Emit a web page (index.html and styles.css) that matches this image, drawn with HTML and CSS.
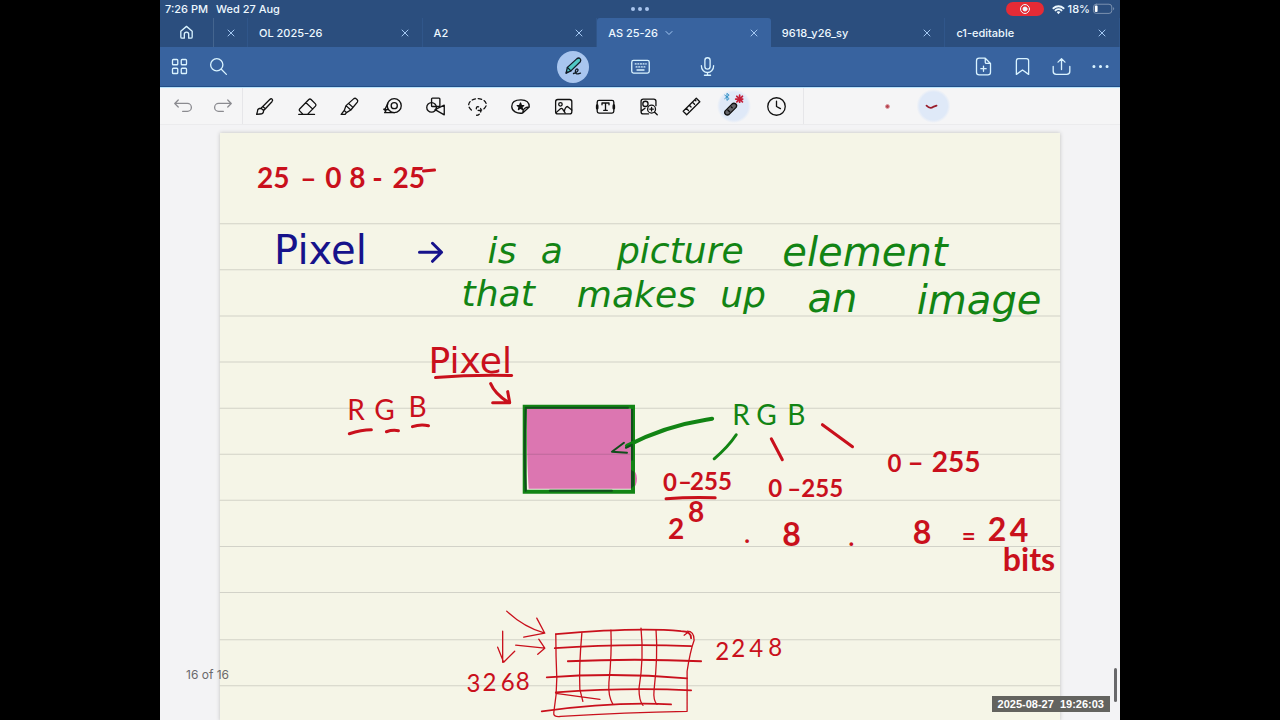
FILE: index.html
```html
<!DOCTYPE html>
<html lang="en">
<head>
<meta charset="utf-8">
<meta name="viewport" content="width=device-width, initial-scale=1">
<title>AS 25-26</title>
<link rel="stylesheet" href="styles.css">
</head>
<body>
<main class="device">
  <header class="status">
    <div class="status-left"><span>7:26 PM</span><span>Wed 27 Aug</span></div>
    <svg class="dots" viewBox="0 0 20 6"><circle cx="3" cy="3" r="2"/><circle cx="10" cy="3" r="2"/><circle cx="17" cy="3" r="2"/></svg>
    <div class="status-right">
      <span class="rec"><svg viewBox="0 0 12 12"><circle cx="6" cy="6" r="4.5"/><circle class="solid" cx="6" cy="6" r="2"/></svg></span>
      <svg class="wifi" viewBox="0 0 14 11"><path d="M1.5 4.2a8 8 0 0 1 11 0M3.7 6.5a4.8 4.8 0 0 1 6.6 0"/><path class="solid" d="M7 10.5 4.9 8.3a3.2 3.2 0 0 1 4.2 0z"/></svg>
      <span>18%</span>
      <svg class="battery" viewBox="0 0 24 12"><rect class="shell" x=".5" y=".8" width="20" height="10" rx="3"/><rect class="charge" x="2" y="2.3" width="3" height="7" rx="1"/><path class="cap" d="M22 4.2c1.5.4 1.5 2.8 0 3.2z"/></svg>
    </div>
  </header>

  <nav class="tabs" aria-label="Open documents">
    <button class="home" aria-label="Home"><svg class="icon" viewBox="0 0 24 24"><path d="M5.500 10.500 12 5l6.500 5.500v6.500q0 1.500-1.500 1.500h-2.500v-4.500a2.500 2.500 0 0 0-5 0v4.500H7Q5.500 18.500 5.500 17z"/></svg></button>
    <div class="tab stub"><button class="close" aria-label="Close tab"><svg viewBox="0 0 8 8"><path d="m1 1 6 6M7 1 1 7"/></svg></button></div>
    <div class="tab"><button class="name">OL 2025-26</button><button class="close" aria-label="Close OL 2025-26"><svg viewBox="0 0 8 8"><path d="m1 1 6 6M7 1 1 7"/></svg></button></div>
    <div class="tab"><button class="name">A2</button><button class="close" aria-label="Close A2"><svg viewBox="0 0 8 8"><path d="m1 1 6 6M7 1 1 7"/></svg></button></div>
    <div class="tab active"><button class="name">AS 25-26 <svg class="chevron" viewBox="0 0 8 8"><path d="m1 2.500 3 3 3-3"/></svg></button><button class="close" aria-label="Close AS 25-26"><svg viewBox="0 0 8 8"><path d="m1 1 6 6M7 1 1 7"/></svg></button></div>
    <div class="tab"><button class="name">9618_y26_sy</button><button class="close" aria-label="Close 9618_y26_sy"><svg viewBox="0 0 8 8"><path d="m1 1 6 6M7 1 1 7"/></svg></button></div>
    <div class="tab"><button class="name">c1-editable</button><button class="close" aria-label="Close c1-editable"><svg viewBox="0 0 8 8"><path d="m1 1 6 6M7 1 1 7"/></svg></button></div>
  </nav>

  <div class="bar">
    <div class="group">
      <button aria-label="Pages"><svg class="icon" viewBox="0 0 24 24"><rect x="4" y="4" width="6" height="6" rx="1"/><rect x="14" y="4" width="6" height="6" rx="1"/><rect x="4" y="14" width="6" height="6" rx="1"/><rect x="14" y="14" width="6" height="6" rx="1"/></svg></button>
      <button aria-label="Search"><svg class="icon" viewBox="0 0 24 24"><circle cx="10" cy="10" r="7"/><path d="m15.500 15.500 5.500 5.500"/></svg></button>
    </div>
    <div class="group modes">
      <button aria-label="Pen mode"><span class="disc"><svg class="icon dark" viewBox="0 0 24 24"><path class="teal" d="m3.500 19.500 1.500-6.500L16 3q2-1.500 3.500 0t.3 3.500L9 17z"/><path d="m5 13 4 4M3.500 19.500l2-1M12 20c4-1 6.500-4 4.500-5s-3.500 3.500-1.500 5 3-.3 5-.5"/></svg></span></button>
      <button aria-label="Keyboard mode"><svg class="icon" viewBox="0 0 24 24"><rect x="2" y="5" width="20" height="14.500" rx="2"/><path d="M8 16h8"/><path class="dash" d="M6 9h12.500M7 12.500h11"/></svg></button>
      <button aria-label="Voice"><svg class="icon" viewBox="0 0 24 24"><rect x="9" y="2" width="6" height="13" rx="3"/><path d="M5 11c0 10.500 14 10.500 14 0M12 19v3M8.500 22h7"/></svg></button>
    </div>
    <div class="group end">
      <button aria-label="Add page"><svg class="icon" viewBox="0 0 24 24"><path d="M14 2.500H7q-3 0-3 3v13q0 3 3 3h10q3 0 3-3V8.500zM14 2.500V7q0 1.500 1.500 1.500H20M12 11.500v6M9 14.500h6"/></svg></button>
      <button aria-label="Bookmark"><svg class="icon" viewBox="0 0 24 24"><path d="M5 21V5.500Q5 3 7.500 3h9Q19 3 19 5.500V21l-7-5z"/></svg></button>
      <button aria-label="Share"><svg class="icon" viewBox="0 0 24 24"><path d="M12 15.500V3M8 7l4-4 4 4M2.500 12v5.500Q2.500 21 6 21h12q3.500 0 3.500-3.500V12"/></svg></button>
      <button aria-label="More"><svg class="icon" viewBox="0 0 24 24"><g class="solid"><circle cx="4.500" cy="12" r="1"/><circle cx="12" cy="12" r="1"/><circle cx="19.500" cy="12" r="1"/></g></svg></button>
    </div>
  </div>

  <div class="tools">
    <div class="history">
      <button aria-label="Undo"><svg class="icon" viewBox="0 0 24 24"><path d="m6 4.500-4 4 4 4M2 8.500h14.500a4.500 4.500 0 0 1 0 9H11"/></svg></button>
      <button aria-label="Redo"><svg class="icon" viewBox="0 0 24 24"><path d="m18 4.500 4 4-4 4M22 8.500H7.500a4.500 4.500 0 0 0 0 9H13"/></svg></button>
    </div>
    <div class="kit">
      <button aria-label="Pen"><svg class="icon" viewBox="0 0 24 24"><path d="M10 12 18 4c2-2 4.500 0 2.500 2.500L13 14.500zM8 14l2-2 3 2.500-2 2zM8 14c-2.500 0-4 1.200-4 3.500L3 21l4-.4c3 0 4-1.800 4-4.100z"/></svg></button>
      <button aria-label="Eraser"><svg class="icon" viewBox="0 0 24 24"><path d="M7 21 3 17q-1-1 0-2.200L13.500 4q1.300-1.300 2.600 0l5 5q1.200 1.300 0 2.600L12 21M10 7.500 18 15M2 21h18"/></svg></button>
      <button aria-label="Highlighter"><svg class="icon" viewBox="0 0 24 24"><path d="m8 11 9-8q1.500-1 2.800.3l1 1q1.200 1.300.2 2.700L13.500 16zM8 11l-2 5.500L8.500 19l5-3M6 16.500 2.500 21H7l1.500-2M11 8.500l5 4.500"/></svg></button>
      <button aria-label="Tape"><svg class="icon" viewBox="0 0 24 24"><circle cx="14" cy="11" r="8"/><circle cx="14" cy="11" r="3.500"/><path d="M14 19H3l1.500-2L2 15l4.500.500M6.500 9l-3 6"/></svg></button>
      <button aria-label="Shapes"><svg class="icon" viewBox="0 0 24 24"><rect x="7.500" y="2.500" width="9.500" height="9.500" rx="1"/><circle cx="7.500" cy="13" r="5.500"/><path d="m11.500 15.500 10.500-5v11z"/></svg></button>
      <button aria-label="Lasso"><svg class="icon" viewBox="0 0 24 24"><path class="lasso" d="M5 16C-2 10 4 3 12 3s13 6 8 11c-4 4-11 3-9-1 1-2 5 0 5 3s-2 6-5 6"/></svg></button>
      <button aria-label="Stickers"><svg class="icon" viewBox="0 0 24 24"><path d="M14.500 19.500C8 20.500 2 17.500 2 12s5-7.500 10.500-7.500S22 7 22 12.500zM14.500 19.500q0-6.500 7.500-7"/><path class="solid" d="m12 8 1 2.700 2.700.2-2 1.800.6 2.800-2.300-1.500-2.300 1.500.6-2.800-2-1.800 2.700-.2z"/></svg></button>
      <button aria-label="Image"><svg class="icon" viewBox="0 0 24 24"><rect x="3" y="4" width="18.500" height="16.500" rx="2.500"/><circle cx="8.500" cy="9.500" r="2"/><path d="m3.500 19 5-4.500q1.500-1 2.500.500l3 4.500M13 18c0-3 2-6 3.500-6l5 4"/></svg></button>
      <button aria-label="Text box"><svg class="icon" viewBox="0 0 24 24"><rect x="2.500" y="5" width="19" height="14.500" rx="2"/><path d="M8 10V8h8v2M12 8v8.500M10 16.500h4"/><path class="thick" d="M2.500 11v3M21.500 11v3"/></svg></button>
      <button aria-label="Image search"><svg class="icon" viewBox="0 0 24 24"><path d="M12 20.500H6q-2.500 0-2.500-2.500V6Q3.500 3.500 6 3.500h12q2.500 0 2.500 2.500v5M4 17l4-3"/><circle cx="8.500" cy="9" r="3"/><circle cx="15.500" cy="15" r="4.500"/><path d="m19 18.500 3 3M13.500 15h4M15.500 13v4"/></svg></button>
      <button aria-label="Ruler"><svg class="icon" viewBox="0 0 24 24"><path d="M2.500 17.500 17.500 2.500l4 4L6.500 21.500zM6 14l2.500 2.500M9.500 10.500l2 2M13 7l2.500 2.500M16 4.500l1 1"/></svg></button>
      <button class="selected" aria-label="Presentation remote"><svg class="icon" viewBox="0 0 24 24"><path class="remote" d="m2.500 17 8-8q2-1.500 4 0t.5 4l-8 8q-2 1.500-4 0t-.5-4z"/><path d="m5.500 16 2 2M9.500 12.500l1 1"/><path class="bt" d="m2-1 5 4-2.500 2v-8L7-1 2 3"/><path class="burst" d="M19-1v9M14.500 3.500h9M15.800.3l6.400 6.400M22.200.3l-6.400 6.400"/></svg></button>
      <button aria-label="Recent"><svg class="icon" viewBox="0 0 24 24"><circle cx="12" cy="12" r="10"/><path d="M12 6v6l4.500 2.500"/></svg></button>
    </div>
    <div class="laser">
      <button aria-label="Laser dot"><svg class="icon" viewBox="0 0 24 24"><circle class="spot" cx="12" cy="12" r="2.300"/></svg></button>
      <button class="selected" aria-label="Laser trail"><svg class="icon" viewBox="0 0 24 24"><path class="trail" d="M4 11q4 4 7.500 1.500l4-1.500"/></svg></button>
    </div>
  </div>

  <section class="workspace">
    <article class="paper">
      <svg class="ink" viewBox="221 133 838 587" role="group" aria-label="Handwritten notes">
        <path class="rule" d="M221 223.500h838M221 269.500h838M221 315.500h838M221 361.500h838M221 407.500h838M221 453.500h838M221 499.500h838M221 545.500h838M221 591.500h838M221 638.500h838M221 684.500h838"/>

        <g class="red heavy s28">
          <text x="258" y="188">25</text><text x="301" y="188">–</text><text x="326" y="188">0</text><text x="350" y="188">8</text><text x="373" y="188">-</text><text x="393" y="188">25</text>
        </g>
        <path class="red line" d="M424 171l11-1"/>
        <text class="blue wide s40" x="275" y="264">Pixel</text>
        <path class="blue line" d="M420 252h22M433 243l9 9-9 9"/>

        <g class="green script wide s36">
          <text x="488" y="263">is</text><text x="541" y="263">a</text><text x="617" y="263">picture</text>
          <text x="462" y="306">that</text><text x="577" y="307">makes</text><text x="720" y="307">up</text>
        </g>
        <g class="green script wide s40">
          <text x="782" y="266">element</text><text x="807" y="312">an</text><text x="916" y="314">image</text>
        </g>

        <text class="red wide s36" x="429" y="372">Pixel</text>
        <path class="red line" d="M436 377q37-3 76-2M491 383q4 10 18 19M493 402h17l-2-11"/>
        <text class="red s28" x="348" y="419">R</text><text class="red s28" x="375" y="419">G</text><text class="red s28" x="409" y="416">B</text>
        <path class="red line" d="M350 433q12-4 22-4M387 431q6-2 12-1M413 426q8-3 16-1"/>

        <path class="pink" d="M527 408h104v61q6 1 6 9t-5 10H529q-2-28-2-80z"/>
        <path class="green box" d="M525 406h108v85H525z"/>
        <path class="shade" d="M526 490q-2-35 0-83h102M632 409v50M550 490h62"/>
        <path class="shade-wide" d="M631 469l3 2v14l-3 3z"/>
        <path class="rule tinted" d="M528 453.500h102"/>
        <path class="green arrow" d="M627 445c23-12 47-21 79-26l6-1"/>
        <path class="shade" d="M626 447l6-3M624 442l-12 9 15 1"/>
        <text class="green s28" x="732" y="424">R</text><text class="green s28" x="756" y="424">G</text><text class="green s28" x="787" y="424">B</text>
        <path class="green line" d="M736 434q-8 12-22 24"/>
        <path class="red line" d="M771 438l11 21M822 424l30 22"/>

        <g class="red heavy s24">
          <text x="663" y="490">0</text><text x="678" y="489">–</text><text x="690" y="489">255</text>
          <text x="768" y="496">0</text><text x="787" y="496">–</text><text x="801" y="496">255</text>
          <text x="887" y="471">0</text><text x="744" y="542">.</text><text x="848" y="545">.</text>
          <text x="961" y="544">=</text>
        </g>
        <path class="red line" d="M666 498q25-2 49-1"/>
        <g class="red heavy s28">
          <text x="907" y="471">–</text><text x="931" y="471">255</text>
          <text x="688" y="521">8</text><text x="668" y="538">2</text>
        </g>
        <g class="red heavy s32">
          <text x="782" y="545">8</text><text x="912" y="543">8</text><text x="987" y="540">2</text><text x="1009" y="541">4</text><text x="1002" y="570">bits</text>
        </g>

        <g class="red s24">
          <text x="467" y="691">3</text><text x="483" y="690">2</text><text x="501" y="690">6</text><text x="516" y="689">8</text>
          <text x="715" y="659">2</text><text x="731" y="656">2</text><text x="749" y="656">4</text><text x="768" y="655">8</text>
        </g>
        <g class="red sketch">
          <path d="M507 610q17 16 38 22M537 617l8 15-21 4M503 630v31M498 646l6 15 11-11M516 644l29 3M539 638l6 9-7 6"/>
          <path d="M556 633q0 22 1 44 0 17-3 34-1 5 7 4 65-4 126-5v-40q3-20 7-31 0-9-7-9M684 634l4-3M582 632q-3 33-2 56l3 12M611 629q1 24-2 52-1 14 4 22M641 627q3 30-2 60 0 13 4 17M656 629q2 25-2 60-1 10 3 14M556 692l44 6"/>
          <path class="bold" d="M556 633q81-7 125-3 10 0 10 7M555 647q70-5 136-2M568 660q67-3 133 0M547 676q70-5 140 1M556 691q72-5 135-2M542 710q72-10 129-7"/>
        </g>
      </svg>
    </article>
    <span class="pages">16 of 16</span>
    <span class="scroll"></span>
    <time class="stamp" datetime="2025-08-27T19:26:03">2025-08-27&nbsp; 19:26:03</time>
  </section>
</main>
</body>
</html>
```

FILE: styles.css
```css
* { box-sizing: border-box; }
body { margin: 0; padding: 0 12.5%; background: #000; font-family: Inter, Roboto, sans-serif; }
button { display: flex; align-items: center; justify-content: center; margin: 0; padding: 0; border: 0; background: none; color: inherit; font: inherit; }
svg { display: block; overflow: visible; fill: none; stroke: currentColor; stroke-linecap: round; stroke-linejoin: round; }
.solid { fill: currentColor; }

.device { display: flex; flex-direction: column; height: 100vh; overflow: hidden; background: #f3f3f5; color: #edf8ff; }

.status { display: grid; grid-template-columns: 1fr auto 1fr; align-items: center; height: 18px; padding: 0 5px; background: #2b4e7e; font-size: 11px; font-weight: 500; }
.status-left { display: flex; gap: 8px; }
.dots { width: 20px; height: 6px; color: #a9c5ee; fill: currentColor; stroke: none; }
.status-right { display: flex; align-items: center; justify-content: flex-end; gap: 3px; }
.rec { display: flex; align-items: center; justify-content: center; width: 38px; height: 14px; margin-right: 5px; border-radius: 7px; background: #e52b35; }
.rec svg { width: 12px; height: 12px; }
.wifi { width: 13px; height: 11px; stroke-width: 2; }
.wifi .solid { stroke: none; }
.battery { width: 22px; height: 12px; }
.shell { stroke: #8297b4; }
.charge { fill: #fff; stroke: none; }
.cap { fill: #8297b4; stroke: none; }

.tabs { display: flex; height: 29px; background: #2b4e7e; font-size: 11px; font-weight: 500; }
.home { width: 53px; }
.tab { display: flex; flex: 1; align-items: center; justify-content: space-between; padding: 0 13px 0 11px; border-right: 1px solid #30568a; }
.tab.stub { flex: none; width: 35px; padding: 0 12px 0 13px; border-left: 1px solid #44658f; }
.tab.active { border: 0; border-radius: 3px 3px 0 0; background: #38639f; }
.name { gap: 7px; white-space: nowrap; }
.chevron, .close svg { width: 8px; height: 8px; color: #a4c8f2; }

.bar { display: grid; grid-template-columns: 1fr auto 1fr; height: 40px; border-bottom: 1px solid #234e87; background: #38639f; }
.group { display: flex; align-items: center; }
.group button { width: 39px; height: 39px; }
.modes button { width: 67px; }
.end { justify-content: flex-end; }
.icon { width: 21px; height: 21px; stroke-width: 1.5; }
.tabs .icon, .bar .icon { color: #d9f3ff; }
.disc { display: flex; align-items: center; justify-content: center; width: 32px; height: 32px; border-radius: 50%; background: #a9c6ef; }
.bar .icon.dark { color: #111c26; }
.teal { fill: #50c9c5; }
.dash { stroke-dasharray: 1 2; }

.tools { display: flex; height: 38px; padding-left: 4px; border-top: 1px solid #b9e2fb; border-bottom: 1px solid #ebebed; background: #f5f5f6; color: #111; }
.tools button { height: 36px; }
.history, .kit, .laser { display: flex; }
.history button { width: 39px; color: #8b8b90; }
.kit { flex: 0 0 562px; padding-right: 5px; border: 1px solid #e6e6e9; border-width: 0 1px; }
.kit button { flex: 1; }
.laser { gap: 3px; padding-left: 62px; }
.laser button { width: 43px; }
.tools .selected { background: radial-gradient(circle, #dfe9f8 14px, transparent 17px); }
.lasso { stroke-dasharray: 4 3; }
.thick { stroke-width: 3; }
.remote { fill: #66666b; }
.bt { stroke: #298bc1; stroke-width: 1; }
.burst { stroke: #c51f39; stroke-width: 2; stroke-dasharray: 2 1; }
.spot { fill: #b74450; stroke: #dc9da4; stroke-width: 1; }
.trail { stroke: #981c2b; stroke-width: 2; }

.workspace { position: relative; flex: 1; min-height: 0; padding: 8px 6.25% 0; overflow: hidden; }
.paper { min-height: 100%; background: #f5f5e7; box-shadow: 0 0 4px #c0c0be; }
.ink { width: 100%; height: auto; font-family: Lato, "Open Sans", sans-serif; stroke-width: 3; }
.ink text { fill: currentColor; stroke: none; }
.wide { font-family: "DejaVu Sans", sans-serif; }
.red { color: #c9101c; stroke: #c9101c; }
.blue { color: #16128b; stroke: #16128b; }
.green { color: #128414; stroke: #128414; }
.rule { stroke: #d2d2c8; stroke-width: 1; }
.tinted { stroke: #bd699a; }
.script { font-style: italic; }
.heavy { font-weight: 700; }
.s24 { font-size: 24px; }
.s28 { font-size: 28px; }
.s32 { font-size: 32px; }
.s36 { font-size: 36px; }
.s40 { font-size: 40px; }
.pink { fill: #dc76b1; stroke: none; }
.box { stroke-width: 4; stroke-linejoin: miter; }
.shade { stroke: #104e1b; stroke-width: 2; }
.shade-wide { fill: #104e1b; stroke: none; }
.arrow { stroke-width: 4; }
.sketch { stroke-width: 1.3; }
.bold { stroke-width: 1.8; }

.pages { position: absolute; bottom: 37px; left: 26px; color: #69696c; font-size: 12px; line-height: 16px; }
.scroll { position: absolute; right: 3px; bottom: 18px; width: 3px; height: 34px; border-radius: 2px; background: #68686a; }
.stamp { position: absolute; right: 10px; bottom: 8px; padding: 0 6px; background: #63635f; color: #fff; font-family: "Liberation Sans", sans-serif; font-size: 11px; font-weight: 700; line-height: 16px; white-space: nowrap; }
```
